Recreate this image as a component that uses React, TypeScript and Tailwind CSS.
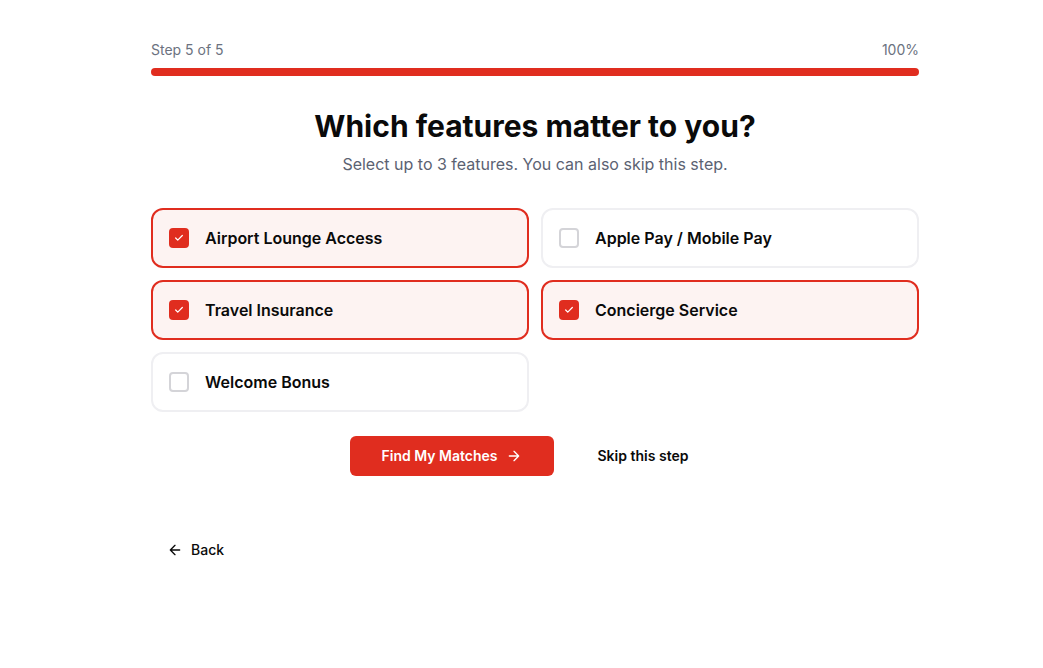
import { useState } from "react"

const features = [
    "Airport Lounge Access",
    "Apple Pay / Mobile Pay",
    "Travel Insurance",
    "Concierge Service",
    "Welcome Bonus",
]

function Check() {
    return (
        <svg width="10" height="10" viewBox="0 0 24 24" fill="none" stroke="white" strokeWidth="3" strokeLinecap="round" strokeLinejoin="round">
            <path d="M20 6 9 17l-5-5" />
        </svg>
    )
}

function Arrow({ left }: { left?: boolean }) {
    return (
        <svg width="16" height="16" viewBox="0 0 24 24" fill="none" stroke="currentColor" strokeWidth="2" strokeLinecap="round" strokeLinejoin="round">
            {left ? <path d="M19 12H5M12 19l-7-7 7-7" /> : <path d="M5 12h14M12 5l7 7-7 7" />}
        </svg>
    )
}

export default function App() {
    const [picked, setPicked] = useState<string[]>(["Airport Lounge Access", "Travel Insurance", "Concierge Service"])

    const toggle = (f: string) => {
        if (picked.includes(f)) setPicked(picked.filter((p) => p !== f))
        else if (picked.length < 3) setPicked([...picked, f])
    }

    return (
        <main className="min-h-screen bg-white font-['Inter',sans-serif] text-[#0a0a0a]">
            <section className="ml-[151px] w-[768px] pt-10">

                <div className="flex justify-between text-sm leading-5 text-[#6b7280]">
                    <span>Step 5 of 5</span>
                    <span>100%</span>
                </div>
                <div className="mt-2 h-2 rounded-full bg-[#e02d1f]"></div>

                <h1 className="mt-8 text-center text-[30px] font-bold leading-9">Which features matter to you?</h1>
                <p className="mt-2 text-center text-base leading-6 text-[#5b6272]">Select up to 3 features. You can also skip this step.</p>

                <div className="mt-8 grid grid-cols-2 gap-3">
                    {features.map((f) => {
                        const on = picked.includes(f)
                        return (
                            <button
                                key={f}
                                onClick={() => toggle(f)}
                                className={`flex h-[60px] items-center gap-4 rounded-xl border-2 px-4 text-left ${on ? "border-[#e02d1f] bg-[#fdf3f2]" : "border-[#efeff2] bg-white"}`}
                            >
                                <span className={`flex h-5 w-5 items-center justify-center rounded-[4px] ${on ? "bg-[#e02d1f]" : "border-2 border-[#d4d4d8] bg-white"}`}>
                                    {on && <Check />}
                                </span>
                                <span className="text-base font-semibold">{f}</span>
                            </button>
                        )
                    })}
                </div>

                <div className="mt-6 flex justify-center gap-3">
                    <button className="flex h-10 items-center gap-2 rounded-md bg-[#e02d1f] px-8 text-sm font-semibold text-white">
                        Find My Matches <Arrow />
                    </button>
                    <button className="h-10 px-8 text-sm font-semibold">Skip this step</button>
                </div>

                <button className="mt-[54px] flex h-10 items-center gap-2 px-4 text-sm font-medium">
                    <Arrow left /> Back
                </button>

            </section>
        </main>
    )
}
